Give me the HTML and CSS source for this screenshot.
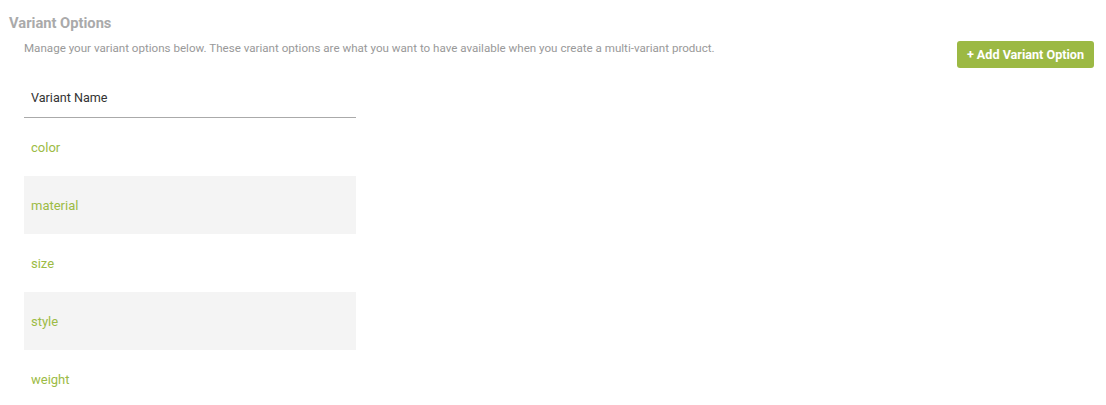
FILE: index.html
```html
<!DOCTYPE HTML>
<html>
<head>
  <title>Variant Options</title>
  <meta charset="utf-8">
  <link rel="stylesheet" href="styles.css">
</head>
<body>
  <div class="page">
    <h2 class="pageTitle">Variant Options</h2>
    <div class="topRow">
      <p class="description">Manage your variant options below. These variant options are what you want to have available when you create a multi-variant product.</p>
      <button class="addBtn">+ Add Variant Option</button>
    </div>
    <table class="variantTable">
      <thead>
        <tr><th>Variant Name</th></tr>
      </thead>
      <tbody>
        <tr><td><a href="#">color</a></td></tr>
        <tr><td><a href="#">material</a></td></tr>
        <tr><td><a href="#">size</a></td></tr>
        <tr><td><a href="#">style</a></td></tr>
        <tr><td><a href="#">weight</a></td></tr>
      </tbody>
    </table>
  </div>
</body>
</html>
```

FILE: styles.css
```css
body {
  margin: 0;
  background-color: #fff;
  font-family: Roboto, "Liberation Sans", sans-serif;
}

.page {
  padding: 14px 12px 0 9px;
}

.pageTitle {
  margin: 0;
  font-size: 14.7px;
  font-weight: bold;
  color: #aaa;
  line-height: 18px;
}

.topRow {
  display: flex;
  justify-content: space-between;
  align-items: flex-start;
  padding-left: 15px;
}

.description {
  margin: 8px 0 0 0;
  font-size: 11.6px;
  color: #999;
  line-height: 16px;
}

.addBtn {
  margin-top: 9px;
  height: 27px;
  padding: 0 10px;
  border: none;
  border-radius: 3px;
  background-color: #9cb944;
  color: #fff;
  font-family: Roboto, "Liberation Sans", sans-serif;
  font-size: 12.6px;
  font-weight: bold;
}

.variantTable {
  margin-left: 15px;
  margin-top: 10px;
  width: 332px;
  border-collapse: collapse;
}

.variantTable th {
  height: 39px;
  padding: 0 7px;
  text-align: left;
  font-size: 12.6px;
  font-weight: normal;
  color: #333;
  border-bottom: 1px solid #aaa;
}

.variantTable td {
  height: 58px;
  padding: 0 7px;
  font-size: 13px;
}

.variantTable tbody tr:nth-child(even) {
  background-color: #f4f4f4;
}

.variantTable a {
  color: #9cbb45;
  text-decoration: none;
}
```
